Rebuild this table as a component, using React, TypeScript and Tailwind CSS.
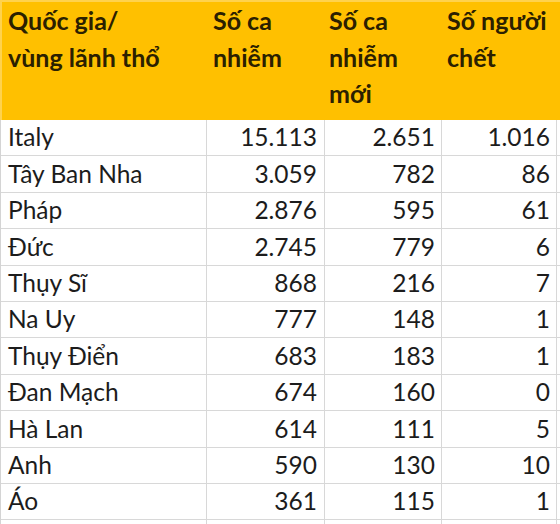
import React from 'react';

// Bảng số ca nhiễm theo quốc gia
const rows: [string, string, string, string][] = [
    ['Italy', '15.113', '2.651', '1.016'],
    ['Tây Ban Nha', '3.059', '782', '86'],
    ['Pháp', '2.876', '595', '61'],
    ['Đức', '2.745', '779', '6'],
    ['Thụy Sĩ', '868', '216', '7'],
    ['Na Uy', '777', '148', '1'],
    ['Thụy Điển', '683', '183', '1'],
    ['Đan Mạch', '674', '160', '0'],
    ['Hà Lan', '614', '111', '5'],
    ['Anh', '590', '130', '10'],
    ['Áo', '361', '115', '1'],
];

const App: React.FC = () => {
    return (
        <div
            className="w-[560px] h-[524px] overflow-hidden bg-white text-[#1c1c1c]"
            style={{ fontFamily: 'Lato, "Noto Sans", sans-serif' }}
        >
            {/* Header */}
            <div className="grid grid-cols-[207px_118px_117px_1fr] h-[120px] bg-[#ffc000] text-[#2b2000] font-bold text-[25px] leading-[36.5px] border-t-2 border-l-2 border-[#ffd24d]">
                <div className="pl-[6px]">
                    Quốc gia/<br />vùng lãnh thổ
                </div>
                <div className="pl-[4px]">
                    Số ca<br />nhiễm
                </div>
                <div className="pl-[2px]">
                    Số ca<br />nhiễm<br />mới
                </div>
                <div className="pl-[3px]">
                    Số người<br />chết
                </div>
            </div>

            {/* Body */}
            <div className="border-l border-[#d4d4d4]">
                {rows.map((r, i) => (
                    <div
                        key={i}
                        className="grid grid-cols-[206px_118px_117px_115px] h-[36.4px] border-b border-[#d8d8d8] text-[24.5px] leading-none"
                    >
                        <div className="flex items-center pl-[7px] border-r border-[#d8d8d8]">{r[0]}</div>
                        <div className="flex items-center justify-end pr-[7px] border-r border-[#d8d8d8]">{r[1]}</div>
                        <div className="flex items-center justify-end pr-[6px] border-r border-[#d8d8d8]">{r[2]}</div>
                        <div className="flex items-center justify-end pr-[6px] border-r border-[#d8d8d8]">{r[3]}</div>
                    </div>
                ))}
                <div className="grid grid-cols-[206px_118px_117px_115px] h-[10px]">
                    <div className="border-r border-[#d8d8d8]" />
                    <div className="border-r border-[#d8d8d8]" />
                    <div className="border-r border-[#d8d8d8]" />
                    <div className="border-r border-[#d8d8d8]" />
                </div>
            </div>
        </div>
    );
};

export default App;
